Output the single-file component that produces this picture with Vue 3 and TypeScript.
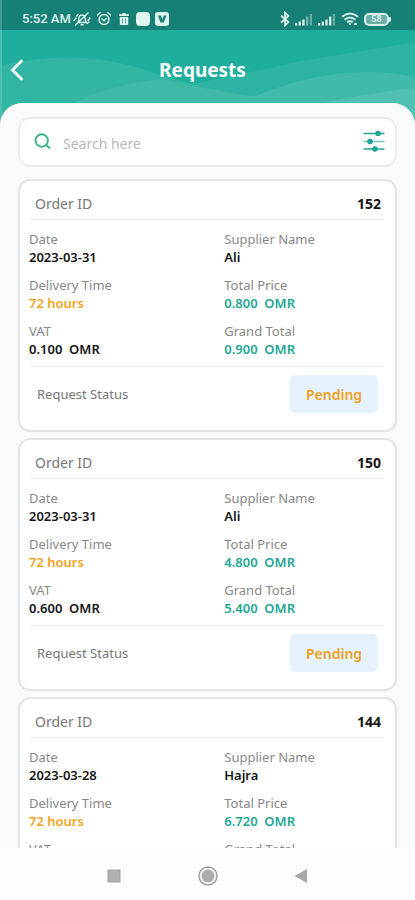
<script setup lang="ts">
import { ref } from 'vue'

interface Order {
  id: number
  date: string
  supplier: string
  delivery: string
  total: string
  vat: string
  grand: string
  status: string
}

const query = ref('')

const orders: Order[] = [
  { id: 152, date: '2023-03-31', supplier: 'Ali', delivery: '72 hours', total: '0.800', vat: '0.100', grand: '0.900', status: 'Pending' },
  { id: 150, date: '2023-03-31', supplier: 'Ali', delivery: '72 hours', total: '4.800', vat: '0.600', grand: '5.400', status: 'Pending' },
  { id: 144, date: '2023-03-28', supplier: 'Hajra', delivery: '72 hours', total: '6.720', vat: '0.840', grand: '7.560', status: 'Pending' },
]
</script>

<template>
  <div class="screen">
    <div class="status">
      <span class="clock">5:52 AM</span>
      <svg class="ic" width="18" height="16" viewBox="0 0 18 16" fill="none" stroke="currentColor" stroke-width="1.4" stroke-linecap="round">
        <path d="M5 11.500C6 10 5.500 7 6.500 5.200C7.500 3.500 10.500 3.500 11.600 5.200C12.500 7 12 10 13.200 11.500ZM8 13.700H10.200M2.500 14L15 2M1 9.500L3 7M15 9.500L17 7M3.500 5L5 3.500M14 12.500L16 11" />
      </svg>
      <svg class="ic alarm" width="16" height="16" viewBox="0 0 16 16" fill="none" stroke="currentColor" stroke-width="1.400" stroke-linecap="round">
        <circle cx="8" cy="8.500" r="5" /><path d="M1.500 4L4.200 1.800M14.500 4L11.800 1.800M6 8L8 9.800L10.300 7.500" />
      </svg>
      <svg class="ic trash" width="12" height="14" viewBox="0 0 12 14" fill="currentColor">
        <path d="M1 2.200H4L4.600 1H7.400L8 2.200H11V4H1ZM1.800 5H10.200V12.200Q10.200 13 9.400 13H2.600Q1.800 13 1.800 12.200Z" />
        <path d="M4.500 6.500V11.500M7.500 6.500V11.500" stroke="#178076" stroke-width=".7" />
      </svg>
      <svg class="ic app" width="14" height="14" viewBox="0 0 14 14"><rect width="14" height="14" rx="4" fill="currentColor" /></svg>
      <svg class="ic app" width="14" height="14" viewBox="0 0 14 14">
        <rect width="14" height="14" rx="3" fill="currentColor" />
        <path d="M3 3.500H6L7 7.500L9 3.500H11.500L8.500 10.500H5.500Z" fill="#178076" />
      </svg>
      <span class="grow"></span>
      <svg class="ic" width="10" height="16" viewBox="0 0 10 16" fill="none" stroke="currentColor" stroke-width="1.700">
        <path d="M1 4.500L8.500 11L5 14.500V1.500L8.500 5L1 11.500" />
      </svg>
      <svg v-for="n in 2" :key="n" class="ic signal" width="18" height="13" viewBox="0 0 18 13" fill="currentColor">
        <path d="M0 10H2.200V12.500H0ZM3.700 8.500H5.900V12.500H3.700ZM7.400 6.500H9.600V12.500H7.400Z" />
        <path d="M11.100 3.500H13.300V12.500H11.100Z" :opacity="n === 2 ? 1 : 0.5" />
        <path d="M14.800 1H17V12.500H14.800Z" opacity=".4" />
      </svg>
      <svg class="ic wifi" width="18" height="14" viewBox="0 0 18 14" fill="none" stroke="currentColor" stroke-width="1.900">
        <path d="M1 4.800Q9-1.800 17 4.800M3.600 7.700Q9 3.200 14.400 7.700M6.200 10.300Q9 8 11.800 10.300" />
        <circle cx="9" cy="12" r="1" fill="currentColor" stroke="none" /><path d="M13 12H16" />
      </svg>
      <span class="battery">58</span>
    </div>

    <header class="header">
      <svg class="waves" viewBox="0 0 415 100" preserveAspectRatio="none" aria-hidden="true">
        <path d="M180 56Q245 44 300 31Q370 20 415 12V100H180Z" fill="#2db3a1" />
        <path d="M0 35Q80 17 150 42Q220 66 300 71V100H0Z" fill="#33b5a3" />
        <path d="M70 74Q110 54 160 49Q210 61 290 72V100H70Z" fill="#40b9a9" />
        <path d="M240 73C285 51 330 41 375 42Q400 43 415 48V100H240Z" fill="#42baab" />
        <path d="M320 73Q370 63 415 58V100H320Z" fill="#50c0b2" />
      </svg>
      <button class="back" type="button" aria-label="Back">
        <svg width="14" height="22" viewBox="0 0 14 22" fill="none" stroke="currentColor" stroke-width="2.800" stroke-linecap="round"><path d="M11.500 2L2.500 11L11.500 20" /></svg>
      </button>
      <h1>Requests</h1>
    </header>

    <main class="sheet">
      <form class="search" @submit.prevent>
        <svg width="17" height="17" viewBox="0 0 17 17" fill="none" stroke="#3db08c" stroke-width="1.900" stroke-linecap="round"><circle cx="7.700" cy="7.500" r="6.200" /><path d="M12.200 12L15.500 15" /></svg>
        <input v-model="query" type="text" aria-label="Search" placeholder="Search here" />
        <button class="filter" type="button" aria-label="Filters">
          <svg width="22" height="22" viewBox="0 0 22 22" fill="#1fa592" stroke="#1fa592" stroke-width="1.500">
            <path d="M.5 3.500H21.500M.5 19H21.500" /><path d="M.5 11.500H21.500" opacity=".6" />
            <g stroke="none"><circle cx="15" cy="3.500" r="2.800" /><circle cx="7" cy="11.500" r="2.800" /><circle cx="12" cy="19" r="2.800" /></g>
          </svg>
        </button>
      </form>

      <div class="list">
        <article v-for="o in orders" :key="o.id" class="card">
          <div class="head"><span>Order ID</span><strong>{{ o.id }}</strong></div>
          <dl class="facts">
            <div><dt>Date</dt><dd>{{ o.date }}</dd></div>
            <div><dt>Supplier Name</dt><dd>{{ o.supplier }}</dd></div>
            <div><dt>Delivery Time</dt><dd class="orange">{{ o.delivery }}</dd></div>
            <div><dt>Total Price</dt><dd class="green">{{ o.total }}&nbsp; OMR</dd></div>
            <div><dt>VAT</dt><dd>{{ o.vat }}&nbsp; OMR</dd></div>
            <div><dt>Grand Total</dt><dd class="green">{{ o.grand }}&nbsp; OMR</dd></div>
          </dl>
          <div class="foot"><span>Request Status</span><button type="button" class="badge">{{ o.status }}</button></div>
        </article>
      </div>
    </main>

    <nav class="nav">
      <button type="button" aria-label="Recent apps"><svg width="20" height="20" viewBox="0 0 20 20"><rect x="4" y="4" width="12" height="12" fill="#b0b0b0" stroke="#9f9f9f" /></svg></button>
      <button type="button" aria-label="Home"><svg width="20" height="20" viewBox="0 0 20 20"><circle cx="10" cy="10" r="9" fill="none" stroke="#a3a3a3" stroke-width="1.500" /><circle cx="10" cy="10" r="6.500" fill="#adadad" /></svg></button>
      <button type="button" aria-label="Back"><svg width="20" height="20" viewBox="0 0 20 20"><path d="M15 3V17L2.500 10Z" fill="#a8a8a8" /></svg></button>
    </nav>
  </div>
</template>

<style>
body {
  margin: 0;
}
</style>

<style scoped>
.screen {
  height: 100vh;
  display: flex;
  flex-direction: column;
  overflow: hidden;
  background: #fdfdfe;
  font-family: "Noto Sans", "Open Sans", sans-serif;
  color: #161616;
}
button {
  border: 0;
  padding: 0;
  background: none;
  font: inherit;
  color: inherit;
}
svg {
  display: block;
  flex: none;
}
.status {
  flex: none;
  height: 30px;
  box-sizing: border-box;
  padding: 8px 26px 0 20px;
  border-left: 2px solid #3b9a90;
  display: flex;
  align-items: center;
  background: #178076;
  color: #dff3f0;
}
.clock {
  font: 500 13px/20px Roboto, sans-serif;
  margin-right: 2px;
}
.alarm {
  margin-left: 5px;
}
.trash {
  margin-left: 6px;
}
.app {
  margin-left: 6px;
}
.app + .app {
  margin-left: 5px;
}
.grow {
  flex: 1;
}
.signal {
  margin-left: 5px;
}
.wifi {
  margin: 0 5px;
}
.battery {
  position: relative;
  width: 21px;
  height: 9px;
  border: 2px solid #d5efeb;
  border-radius: 5px;
  background: #6cb0a8;
  font: 700 9px/9px Roboto, sans-serif;
  text-align: center;
}
.battery::after {
  content: "";
  position: absolute;
  right: -4px;
  top: 2px;
  width: 2px;
  height: 5px;
  border-radius: 1px;
  background: #d5efeb;
}
.header {
  flex: none;
  position: relative;
  height: 100px;
  box-sizing: border-box;
  padding: 26px 10px 0 8px;
  border-left: 2px solid #4dbfb0;
  display: grid;
  grid-template-columns: 20px 1fr 30px;
  align-items: start;
  background: #1eae9c;
  color: #fff;
}
.waves {
  position: absolute;
  inset: 0;
  width: 100%;
  height: 100%;
}
.back {
  position: relative;
  height: 28px;
  display: flex;
  align-items: center;
}
h1 {
  position: relative;
  margin: 0;
  font-size: 19px;
  line-height: 28px;
  font-weight: 700;
  text-align: center;
}
.sheet {
  flex: 1;
  min-height: 0;
  position: relative;
  margin-top: -27px;
  padding: 14px 18px 0;
  display: flex;
  flex-direction: column;
  gap: 12px;
  background: #f9fafc;
  border-radius: 22px 22px 0 0;
}
.search {
  flex: none;
  height: 50px;
  box-sizing: border-box;
  padding: 0 10px 2px 14px;
  display: flex;
  align-items: center;
  gap: 12px;
  border: 2px solid #ebecee;
  border-radius: 12px;
  background: #fff;
}
.search input {
  flex: 1;
  min-width: 0;
  border: 0;
  outline: 0;
  padding: 6px 0 0;
  background: none;
  font: 14px/20px "Noto Sans", sans-serif;
  color: #444;
}
.search input::placeholder {
  color: #b9b9b9;
  opacity: 1;
}
.list {
  flex: 1;
  min-height: 0;
  overflow-y: auto;
  scrollbar-width: none;
  display: flex;
  flex-direction: column;
  gap: 6px;
}
.card {
  flex: none;
  padding: 0 11px 0 9px;
  border: 2px solid #e2e4e6;
  border-radius: 12px;
  background: #fff;
}
.head,
.foot {
  display: flex;
  justify-content: space-between;
  align-items: center;
  color: #777;
}
.head {
  height: 39px;
  padding: 6px 3px 0 6px;
  box-sizing: border-box;
  border-bottom: 1px solid #ebebeb;
  font-size: 14px;
}
.head strong {
  color: #161616;
  font-weight: 700;
}
.facts {
  margin: 0;
  padding: 10px 0 8px;
  display: grid;
  grid-template-columns: 11fr 9fr;
  row-gap: 10px;
}
dt,
dd {
  margin: 0;
  font-size: 13px;
  line-height: 18px;
}
dt {
  color: #888;
}
dd {
  font-weight: 600;
}
.orange {
  color: #f5a31a;
}
.green {
  color: #22a894;
}
.foot {
  border-top: 1px solid #ebebeb;
  padding: 8px 6px 17px 8px;
  font-size: 13px;
}
.badge {
  width: 88px;
  height: 38px;
  border-radius: 5px;
  background: #e6f2fb;
  color: #eda024;
  font-size: 14px;
  font-weight: 600;
}
.nav {
  flex: none;
  height: 52px;
  box-sizing: border-box;
  padding-top: 3px;
  display: flex;
  justify-content: center;
  align-items: center;
  gap: 74px;
  background: #fdfdfe;
}
</style>
